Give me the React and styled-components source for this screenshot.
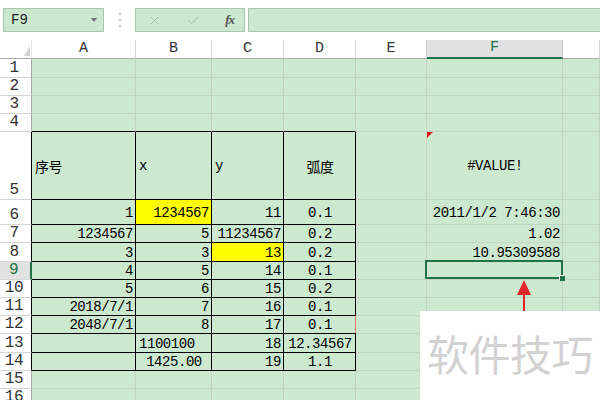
import styled, { createGlobalStyle } from "styled-components";
import { X, Check } from "lucide-react";

const GREEN = "#cce8cf";
const GRID = "#c2d3c4";
const DARK = "#217346";
const HEAD_LINE = "#d6d6d6";
const HEAD_EDGE = "#a8a8a8";
const MONO = `"Liberation Mono", "Noto Sans CJK SC", monospace`;

const GlobalStyle = createGlobalStyle`
  html, body {
    margin: 0;
    padding: 0;
    background: #fff;
  }
  body {
    width: 600px;
    height: 400px;
    overflow: hidden;
    font-family: ${MONO};
  }
`;

const Page = styled.div`
  position: relative;
  width: 600px;
  height: 400px;
  overflow: hidden;
  background: #fff;
`;

const Toolbar = styled.div`
  display: flex;
  align-items: center;
  height: 40px;
  padding-left: 3px;
  box-sizing: border-box;
`;

const NameBox = styled.div`
  display: flex;
  align-items: center;
  justify-content: space-between;
  width: 101px;
  height: 24px;
  box-sizing: border-box;
  padding: 0 6px 0 7px;
  background: ${GREEN};
  border: 1px solid #abc6ae;
  font-family: ${MONO};
  font-size: 14px;
  color: #222;
`;

const DropArrow = styled.span`
  width: 0;
  height: 0;
  border-left: 3px solid transparent;
  border-right: 3px solid transparent;
  border-top: 4px solid #707070;
`;

const Divider = styled.div`
  width: 31px;
  display: flex;
  flex-direction: column;
  align-items: center;
  gap: 4px;
  span {
    width: 2px;
    height: 2px;
    border-radius: 1px;
    background: #b0b0b0;
  }
`;

const FxGroup = styled.div`
  display: flex;
  align-items: center;
  justify-content: space-between;
  width: 110px;
  height: 24px;
  box-sizing: border-box;
  padding: 0 10px 0 12px;
  background: ${GREEN};
  border: 1px solid #abc6ae;
  color: #a3b8a6;
`;

const FxLabel = styled.span`
  font-family: "Liberation Serif", serif;
  font-style: italic;
  font-weight: bold;
  font-size: 13px;
  color: #555;
  letter-spacing: -1px;
`;

const FormulaBar = styled.div`
  flex: 1;
  height: 24px;
  margin-left: 3px;
  margin-right: -2px;
  box-sizing: border-box;
  background: ${GREEN};
  border: 1px solid #abc6ae;
`;

const Sheet = styled.div`
  display: grid;
  grid-template-columns: 32px 104px 76px 72px 72px 71px 136px 1fr;
  grid-template-rows: 19px ${(p) => p.$rows.map((h) => `${h}px`).join(" ")};
`;

const Corner = styled.div`
  position: relative;
  background: #fff;
  border-right: 1px solid #e4e4e4;
  border-bottom: 1px solid ${HEAD_EDGE};
  svg {
    position: absolute;
    right: 1px;
    bottom: 2px;
  }
`;

const ColHead = styled.div`
  box-sizing: border-box;
  display: flex;
  align-items: flex-end;
  justify-content: center;
  padding-bottom: 1px;
  background: ${(p) => (p.$active ? "#e1e1e1" : "#fff")};
  color: ${(p) => (p.$active ? DARK : "#333")};
  border-right: 1px solid ${(p) => (p.$active ? "#c4c4c4" : HEAD_LINE)};
  border-bottom: ${(p) => (p.$active ? `2px solid ${DARK}` : `1px solid ${HEAD_EDGE}`)};
  font-family: ${MONO};
  font-size: 15px;
  line-height: 16px;
`;

const RowHead = styled.div`
  box-sizing: border-box;
  display: flex;
  align-items: flex-end;
  justify-content: center;
  padding: 0 3px 1px 0;
  background: ${(p) => (p.$active ? "#e1e1e1" : "#fff")};
  color: ${(p) => (p.$active ? DARK : "#333")};
  border-right: ${(p) => (p.$active ? `2px solid ${DARK}` : `1px solid ${p.$edge}`)};
  border-bottom: 1px solid ${HEAD_LINE};
  font-family: ${MONO};
  font-size: 16px;
  line-height: 16px;
  letter-spacing: -0.4px;
`;

const Cell = styled.div`
  position: relative;
  box-sizing: border-box;
  display: flex;
  align-items: center;
  justify-content: ${(p) =>
    p.$align === "right" ? "flex-end" : p.$align === "center" ? "center" : "flex-start"};
  padding: 1px 2px 0 3px;
  background: ${(p) => (p.$yellow ? "#ffff00" : GREEN)};
  border-right: 1px solid ${(p) => p.$rb};
  border-bottom: 1px solid ${(p) => p.$bb};
  font-family: ${MONO};
  font-size: 14px;
  letter-spacing: -0.45px;
  white-space: nowrap;
  color: #000;

  ${(p) =>
    p.$flag &&
    `&::before {
      content: "";
      position: absolute;
      top: 0;
      left: 0;
      border-top: 6px solid #e0141c;
      border-right: 6px solid transparent;
    }`}

  ${(p) =>
    p.$mark &&
    `&::before {
      content: "";
      position: absolute;
      top: 0;
      bottom: 0;
      right: -2px;
      width: 2px;
      background: #ee7b6c;
    }`}

  ${(p) =>
    p.$selected &&
    `&::after {
      content: "";
      position: absolute;
      top: -2px;
      left: -2px;
      right: -1px;
      bottom: 0;
      border: 2px solid ${DARK};
      z-index: 2;
    }`}
`;

const Handle = styled.span`
  position: absolute;
  right: -3px;
  bottom: -2px;
  width: 5px;
  height: 5px;
  background: ${DARK};
  box-shadow: -1px -1px 0 #fff;
  z-index: 3;
`;

const Arrow = styled.svg`
  position: absolute;
  left: 514px;
  top: 279px;
`;

const Watermark = styled.div`
  position: absolute;
  left: 420px;
  top: 311px;
  width: 180px;
  height: 89px;
  background: #fff;
  box-sizing: border-box;
  padding: 18px 0 0 7px;
  font-family: "Noto Sans CJK SC", sans-serif;
  font-size: 42px;
  line-height: 48px;
  color: #d2d2d2;
  white-space: nowrap;
  letter-spacing: -0.5px;
`;

const COLS = ["A", "B", "C", "D", "E", "F", "G"];
const ROW_H = [19, 18, 18, 18, 68, 25, 18, 19, 18, 18, 18, 18, 19, 18, 18, 18];

const r = (t) => ({ t, a: "right" });
const c = (t) => ({ t, a: "center" });

const DATA = {
  5: {
    A: { t: "序号" },
    B: { t: "x" },
    C: { t: "y" },
    D: c("弧度"),
    F: { t: "#VALUE!", a: "center", flag: true },
  },
  6: { A: r("1"), B: { t: "1234567", a: "right", yellow: true }, C: r("11"), D: c("0.1"), F: r("2011/1/2 7:46:30") },
  7: { A: r("1234567"), B: r("5"), C: r("11234567"), D: c("0.2"), F: r("1.02") },
  8: { A: r("3"), B: r("3"), C: { t: "13", a: "right", yellow: true }, D: c("0.2"), F: r("10.95309588") },
  9: { A: r("4"), B: r("5"), C: r("14"), D: c("0.1"), F: { t: "", selected: true } },
  10: { A: r("5"), B: r("6"), C: r("15"), D: c("0.2") },
  11: { A: r("2018/7/1"), B: r("7"), C: r("16"), D: c("0.1") },
  12: { A: r("2048/7/1"), B: r("8"), C: r("17"), D: { t: "0.1", a: "center", mark: true } },
  13: { B: { t: "1100100" }, C: r("18"), D: c("12.34567") },
  14: { B: c("1425.00"), C: r("19"), D: c("1.1") },
};

const TABLE_COLS = ["A", "B", "C", "D"];

const App = () => {
  return (
    <Page>
      <GlobalStyle />
      <Toolbar>
        <NameBox>
          F9
          <DropArrow />
        </NameBox>
        <Divider>
          <span />
          <span />
          <span />
        </Divider>
        <FxGroup>
          <X size={13} strokeWidth={1.4} />
          <Check size={15} strokeWidth={1.4} />
          <FxLabel>fx</FxLabel>
        </FxGroup>
        <FormulaBar />
      </Toolbar>

      <Sheet $rows={ROW_H}>
        <Corner>
          <svg width="6" height="10" viewBox="0 0 6 10">
            <polygon points="0,10 6,10 6,0" fill="#d2d2d2" />
          </svg>
        </Corner>
        {COLS.map((col) => (
          <ColHead key={col} $active={col === "F"}>
            {col === "G" ? "" : col}
          </ColHead>
        ))}

        {ROW_H.map((_, i) => {
          const row = i + 1;
          const inRows = row >= 5 && row <= 14;
          return [
            <RowHead key={`h${row}`} $active={row === 9} $edge={inRows ? "#000" : HEAD_EDGE}>
              {row}
            </RowHead>,
            ...COLS.map((col) => {
              const cell = (DATA[row] && DATA[row][col]) || {};
              const inTable = inRows && TABLE_COLS.includes(col);
              const topOfTable = row === 4 && TABLE_COLS.includes(col);
              return (
                <Cell
                  key={`${col}${row}`}
                  $align={cell.a}
                  $yellow={cell.yellow}
                  $flag={cell.flag}
                  $mark={cell.mark}
                  $selected={cell.selected}
                  $rb={inTable ? "#000" : GRID}
                  $bb={inTable || topOfTable ? "#000" : GRID}
                >
                  {cell.t}
                  {cell.selected && <Handle />}
                </Cell>
              );
            }),
          ];
        })}
      </Sheet>

      <Arrow width="20" height="34" viewBox="0 0 20 34">
        <line x1="10" y1="14" x2="10" y2="33" stroke="#e3262b" strokeWidth="2" />
        <polygon points="10,1 3,16 17,16" fill="#e3262b" />
      </Arrow>

      <Watermark>软件技巧</Watermark>
    </Page>
  );
};

export default App;
